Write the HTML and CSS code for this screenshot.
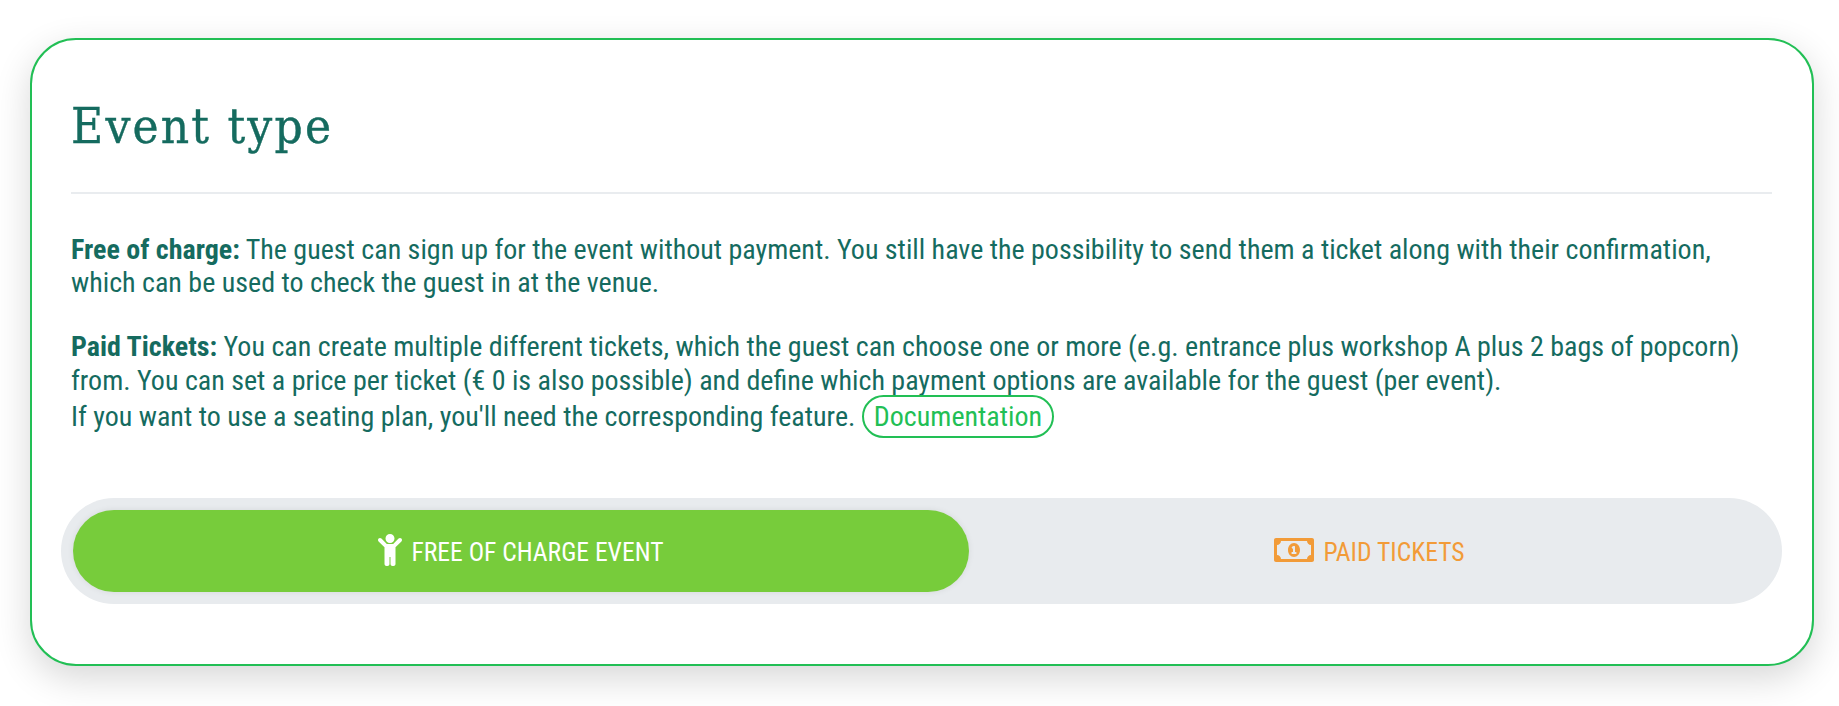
FILE: index.html
```html
<!DOCTYPE html>
<html lang="en">
<head>
<meta charset="utf-8">
<title>Event type</title>
<link rel="stylesheet" href="styles.css">
</head>
<body>
<section class="card">
  <h2 class="title">Event type</h2>
  <hr class="rule">
  <p class="copy"><strong>Free of charge:</strong> The guest can sign up for the event without payment. You still have the possibility to send them a ticket along with their confirmation, which can be used to check the guest in at the venue.</p>
  <p class="copy"><strong>Paid Tickets:</strong> You can create multiple different tickets, which the guest can choose one or more (e.g. entrance plus workshop A plus 2 bags of popcorn) from. You can set a price per ticket (€ 0 is also possible) and define which payment options are available for the guest (per event).<br>If you want to use a seating plan, you'll need the corresponding feature. <a class="doc" href="#">Documentation</a></p>
  <div class="switch">
    <button class="tab tab-on" type="button">
      <svg class="icon icon-child" viewBox="0 0 384 512" aria-hidden="true"><path d="M120 72c0-39.765 32.235-72 72-72s72 32.235 72 72c0 39.764-32.235 72-72 72s-72-32.236-72-72zm254.627 1.373c-12.496-12.497-32.758-12.497-45.254 0L242.745 160H141.254L54.627 73.373c-12.496-12.497-32.758-12.497-45.254 0-12.497 12.497-12.497 32.758 0 45.254L104 213.254V480c0 17.673 14.327 32 32 32h16c17.673 0 32-14.327 32-32V368h16v112c0 17.673 14.327 32 32 32h16c17.673 0 32-14.327 32-32V213.254l94.627-94.627c12.497-12.497 12.497-32.757 0-45.254z"/></svg>
      FREE OF CHARGE EVENT
    </button>
    <button class="tab tab-off" type="button">
      <svg class="icon icon-bill" viewBox="0 0 640 512" aria-hidden="true"><path d="M320 144c-53.02 0-96 50.14-96 112 0 61.85 42.98 112 96 112 53 0 96-50.13 96-112 0-61.86-42.98-112-96-112zm40 168c0 4.42-3.58 8-8 8h-64c-4.42 0-8-3.58-8-8v-16c0-4.42 3.58-8 8-8h16v-55.44l-.47.31a7.992 7.992 0 0 1-11.09-2.22l-8.88-13.31a7.992 7.992 0 0 1 2.22-11.09l15.33-10.22a23.99 23.99 0 0 1 13.31-4.03H328c4.42 0 8 3.58 8 8v88h16c4.42 0 8 3.58 8 8v16zM608 64H32C14.33 64 0 78.33 0 96v320c0 17.67 14.33 32 32 32h576c17.67 0 32-14.33 32-32V96c0-17.67-14.33-32-32-32zm-16 272c-35.35 0-64 28.65-64 64H112c0-35.35-28.65-64-64-64V176c35.35 0 64-28.65 64-64h416c0 35.35 28.65 64 64 64v160z"/></svg>
      PAID TICKETS
    </button>
  </div>
</section>
</body>
</html>
```
FILE: styles.css
```css
* { box-sizing: border-box; }
html, body { margin: 0; height: 100%; background: #fff; }
body {
  padding: 38px 25px 40px 30px;
  font-family: Roboto, "Liberation Sans", sans-serif;
  font-stretch: condensed;
  color: #156b5f;
  overflow: hidden;
}
.card {
  height: 628px;
  padding: 0 40px 0 39px;
  background: #fff;
  border: 2px solid #22bf55;
  border-radius: 46px;
  box-shadow: 0 12px 36px rgba(0, 0, 0, .16);
}
.title {
  margin: 0;
  padding-top: 57px;
  font-family: "DejaVu Serif", serif;
  font-weight: 400;
  font-size: 49px;
  letter-spacing: 2.2px;
  line-height: 60px;
  color: #156b5f;
  -webkit-text-stroke: .4px #156b5f;
}
.rule { margin: 35px 0 0; border: 0; height: 2px; background: #e9ecef; }
.copy { margin: 39px 0 0; font-size: 28px; line-height: 33.2px; }
.copy + .copy { margin-top: 31px; }
.copy strong { font-weight: 700; }
.doc {
  display: inline-block;
  margin-top: -2px;
  padding: 3px 10px;
  line-height: 33px;
  border: 2px solid #22bf55;
  border-radius: 22px;
  color: #22bf55;
  text-decoration: none;
}
.switch {
  display: flex;
  height: 106px;
  margin: 60px -10px 0;
  padding: 12px;
  background: #e8ebee;
  border-radius: 53px;
}
.tab {
  flex: 1 1 auto;
  display: flex;
  align-items: center;
  justify-content: center;
  gap: 9px;
  padding: 2px 6px 0;
  border: 0;
  border-radius: 41px;
  background: transparent;
  font: inherit;
  font-stretch: condensed;
  font-size: 25.6px;
}
.tab-on { background: #77cc3b; color: #fff; box-shadow: 0 0 6px rgba(0, 0, 0, .08); }
.tab-off { color: #f29b38; }
.icon { height: 32px; margin-bottom: 4px; fill: currentColor; }
.icon-child { width: 24px; }
.icon-bill { width: 40px; }
```
